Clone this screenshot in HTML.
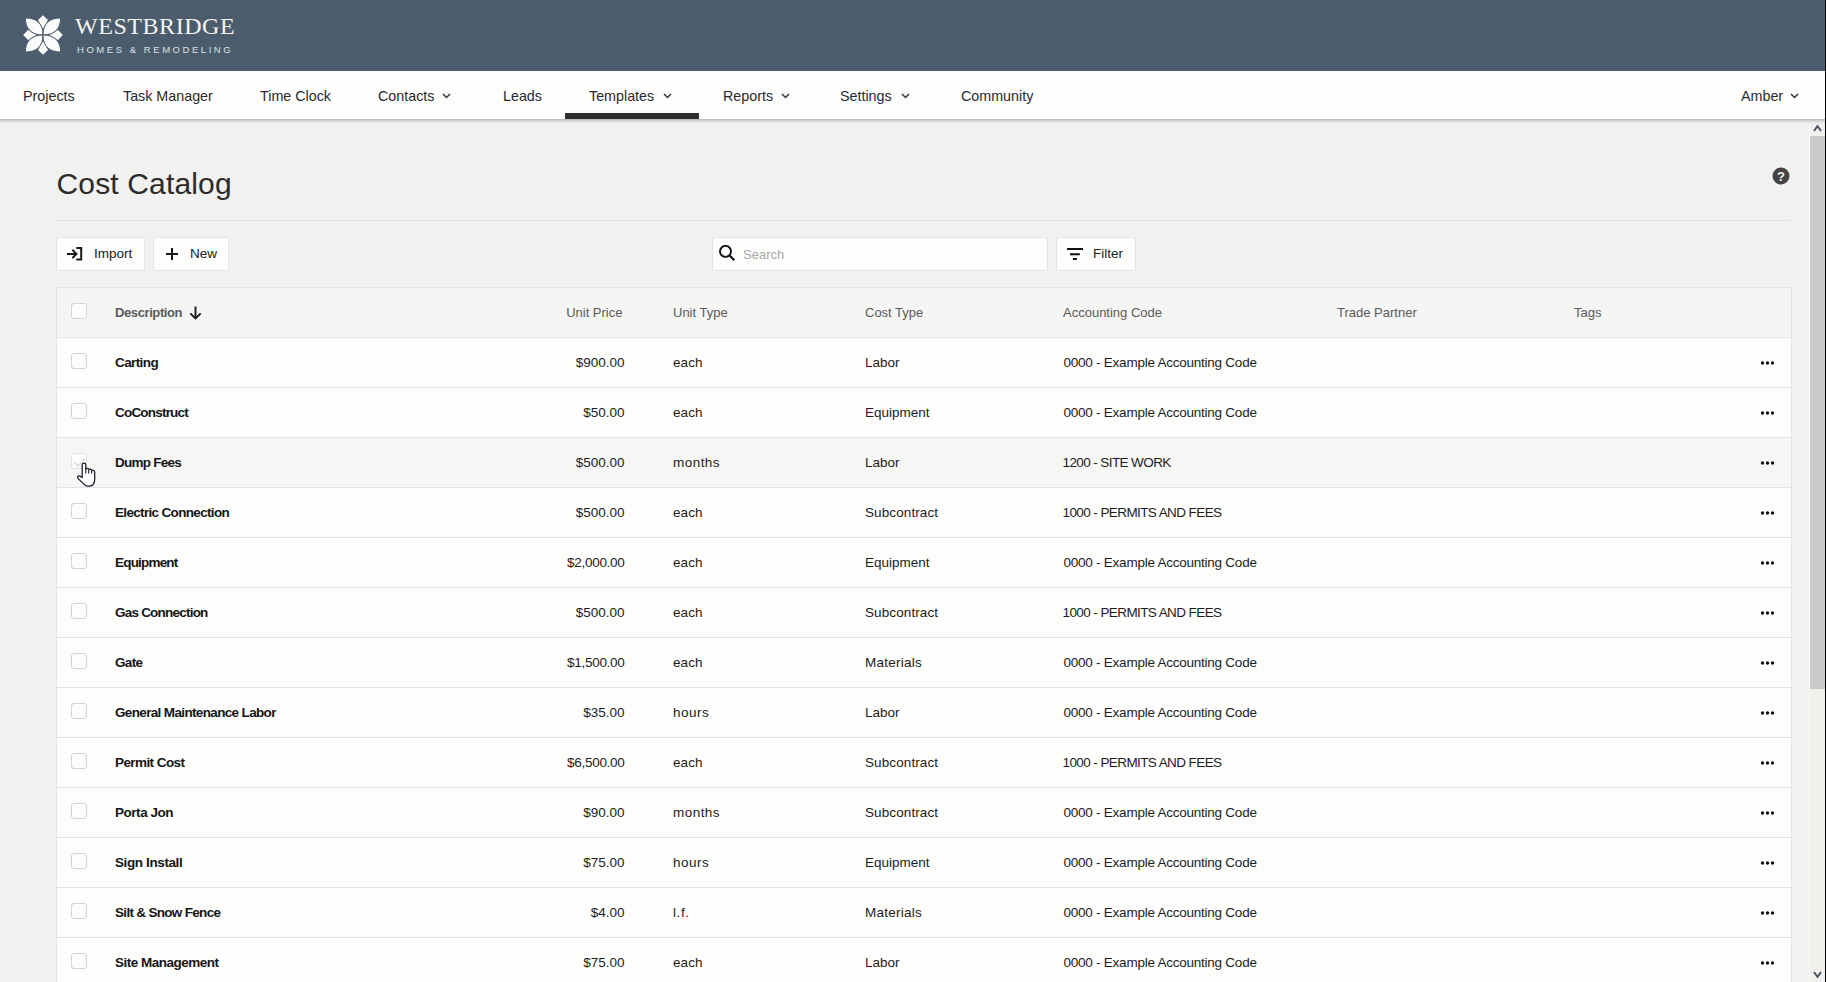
<!DOCTYPE html>
<html><head><meta charset="utf-8">
<style>
*{box-sizing:border-box;margin:0;padding:0}
html,body{width:1826px;height:982px;overflow:hidden;background:#f1f1ef;font-family:"Liberation Sans",sans-serif;color:#222}
.abs{position:absolute;white-space:nowrap}
#hdr{position:absolute;left:0;top:0;width:1826px;height:71px;background:#4b5d6c}
#nav{position:absolute;left:0;top:71px;width:1826px;height:48px;background:#fdfdfc}
#shd{position:absolute;left:0;top:119px;width:1825px;height:5px;background:linear-gradient(#bababa,#c8c8c9 20%,#d6d6d6 40%,#e2e2e2 60%,#ebebeb 80%,#f0f0ef)}
.nv{position:absolute;top:88px;font-size:14.3px;color:#262b31;line-height:16px}
.chev{position:absolute;top:93px;width:9px;height:6px}
#ul{position:absolute;left:565px;top:113px;width:134px;height:6px;background:#2d2d2d}
#title{position:absolute;left:56.5px;top:166.5px;font-size:30px;letter-spacing:0.15px;line-height:34px;color:#2b2b2b}
#hr{position:absolute;left:56px;top:220px;width:1735px;height:1px;background:#e3e3e3}
.btn{position:absolute;top:237px;height:34px;background:#fdfdfc;border:1px solid #e4e4e4;border-radius:1px}
.btxt{position:absolute;top:246px;font-size:13.5px;line-height:16px;color:#222}
#search{position:absolute;left:712px;top:237px;width:336px;height:34px;background:#fdfdfc;border:1px solid #e4e4e4;border-radius:1px}
#tbl{position:absolute;left:56px;top:287px;width:1736px;height:700px;border:1px solid #e3e3e3;background:#fdfdfc}
.th{position:absolute;top:0;left:0;width:1734px;height:50px;background:#f5f5f4;border-bottom:1px solid #e3e3e3}
.row{position:absolute;left:0;width:1734px;height:50px;border-bottom:1px solid #e3e3e3}
.cb{position:absolute;left:14px;top:15px;width:16px;height:16px;border:1px solid #d2d2d2;border-radius:3px;background:#fdfdfc}
.c{position:absolute;top:17px;font-size:13.5px;line-height:16px;color:#1c1c1c;white-space:nowrap}
.th .c{font-size:13px}
.hc{color:#5a5a5a}
.d{font-weight:bold;color:#161616;font-size:13.5px}
.pr{text-align:right;width:200px}
.dots{position:absolute;left:1703px;top:22.5px;width:16px;height:4px}
#sb{position:absolute;left:1809px;top:119px;width:16px;height:863px;background:#f2f0ec;border-left:1px solid #fafafa}
#thumb{position:absolute;left:1810px;top:136px;width:15px;height:553px;background:#cacaca}
#edge{position:absolute;left:1825px;top:0;width:1px;height:982px;background:#000}
</style></head><body>
<div id="hdr"></div>
<svg class="abs" style="left:22.5px;top:14.6px" width="40" height="40" viewBox="0 0 40 40">
<g fill="#fbfbfa">
<path d="M20 0.2 L25 5 L20 14 L15 5 Z"/>
<path d="M20 39.8 L25 35 L20 26 L15 35 Z"/>
<path d="M0.2 20 L5 25 L14 20 L5 15 Z"/>
<path d="M39.8 20 L35 25 L26 20 L35 15 Z"/>
</g>
<g fill="#fbfbfa" stroke="#4b5d6c" stroke-width="1">
<path d="M2.40 3.00 C12.96 3.00 20.00 8.10 20.00 20.00 C7.68 20.00 2.40 13.20 2.40 3.00 Z"/>
<path d="M2.40 37.00 C12.96 37.00 20.00 31.90 20.00 20.00 C7.68 20.00 2.40 26.80 2.40 37.00 Z"/>
<path d="M37.60 3.00 C27.04 3.00 20.00 8.10 20.00 20.00 C32.32 20.00 37.60 13.20 37.60 3.00 Z"/>
<path d="M37.60 37.00 C27.04 37.00 20.00 31.90 20.00 20.00 C32.32 20.00 37.60 26.80 37.60 37.00 Z"/>
</g></svg>
<div class="abs" style="left:75px;top:12px;font-family:'Liberation Serif',serif;font-size:24px;line-height:28px;color:#f3f3f2;letter-spacing:0.55px">WESTBRIDGE</div>
<div class="abs" style="left:77px;top:44px;font-size:9.5px;line-height:11px;color:#dde1e5;letter-spacing:2.55px">HOMES &amp; REMODELING</div>

<div id="nav"></div>
<div class="nv" style="left:23px">Projects</div>
<div class="nv" style="left:123px">Task Manager</div>
<div class="nv" style="left:260px">Time Clock</div>
<div class="nv" style="left:378px">Contacts</div>
<svg class="chev" style="left:442px" viewBox="0 0 9 6"><path d="M1 1 L4.5 4.5 L8 1" fill="none" stroke="#333" stroke-width="1.5"/></svg>
<div class="nv" style="left:503px">Leads</div>
<div class="nv" style="left:589px">Templates</div>
<svg class="chev" style="left:663px" viewBox="0 0 9 6"><path d="M1 1 L4.5 4.5 L8 1" fill="none" stroke="#333" stroke-width="1.5"/></svg>
<div id="ul"></div>
<div class="nv" style="left:723px">Reports</div>
<svg class="chev" style="left:781px" viewBox="0 0 9 6"><path d="M1 1 L4.5 4.5 L8 1" fill="none" stroke="#333" stroke-width="1.5"/></svg>
<div class="nv" style="left:840px">Settings</div>
<svg class="chev" style="left:901px" viewBox="0 0 9 6"><path d="M1 1 L4.5 4.5 L8 1" fill="none" stroke="#333" stroke-width="1.5"/></svg>
<div class="nv" style="left:961px">Community</div>
<div class="nv" style="left:1741px">Amber</div>
<svg class="chev" style="left:1789.5px" viewBox="0 0 9 6"><path d="M1 1 L4.5 4.5 L8 1" fill="none" stroke="#333" stroke-width="1.5"/></svg>

<div id="title">Cost Catalog</div>
<svg class="abs" style="left:1772px;top:167px" width="18" height="18" viewBox="0 0 18 18"><circle cx="9" cy="9" r="8.5" fill="#444"/><text x="9" y="13.5" text-anchor="middle" font-family="Liberation Sans" font-weight="bold" font-size="13" fill="#f1f1f0">?</text></svg>
<div id="hr"></div>

<div class="btn" style="left:56px;width:89px"></div>
<svg class="abs" style="left:66px;top:246px" width="17" height="15" viewBox="0 0 17 15"><path d="M1 7.9 H10.3 M6.3 3.7 L10.5 7.9 L6.3 12.1 M10.3 1.9 H15.2 V13.6 H10.3" fill="none" stroke="#1a1a1a" stroke-width="2"/></svg>
<div class="btxt" style="left:94px">Import</div>
<div class="btn" style="left:153px;width:76px"></div>
<svg class="abs" style="left:165px;top:247px" width="14" height="14" viewBox="0 0 14 14"><path d="M7 1 V13 M1 7 H13" fill="none" stroke="#1a1a1a" stroke-width="2"/></svg>
<div class="btxt" style="left:190px">New</div>

<div id="search"></div>
<svg class="abs" style="left:719px;top:245px" width="18" height="18" viewBox="0 0 18 18"><circle cx="6.5" cy="6.4" r="5.5" fill="none" stroke="#111" stroke-width="1.9"/><path d="M10.6 10.5 L15.3 15.2" stroke="#111" stroke-width="2.1"/></svg>
<div class="btxt" style="left:743px;top:247px;color:#a8a8a8;font-size:13px">Search</div>
<div class="btn" style="left:1056px;width:80px"></div>
<svg class="abs" style="left:1066px;top:247px" width="18" height="14" viewBox="0 0 18 14"><path d="M1 2 H17 M4 7.2 H13.8 M6.9 12.1 H10.9" fill="none" stroke="#111" stroke-width="2"/></svg>
<div class="btxt" style="left:1093px">Filter</div>

<div id="tbl">
 <div class="th">
  <div class="cb"></div>
  <div class="c hc" style="left:58px;font-weight:bold;letter-spacing:-0.4px">Description</div>
  <svg class="abs" style="left:131.5px;top:18px" width="13" height="14" viewBox="0 0 13 14"><path d="M6.5 0.5 V12.5 M1.3 7.3 L6.5 12.5 L11.7 7.3" fill="none" stroke="#1a1a1a" stroke-width="1.9"/></svg>
  <div class="c hc pr" style="left:365.5px">Unit Price</div>
  <div class="c hc" style="left:616px">Unit Type</div>
  <div class="c hc" style="left:808px">Cost Type</div>
  <div class="c hc" style="left:1006px">Accounting Code</div>
  <div class="c hc" style="left:1280px">Trade Partner</div>
  <div class="c hc" style="left:1517px">Tags</div>
 </div>
 <div class="row" style="top:50px"><div class="cb"></div><div class="c d" style="left:58px;letter-spacing:-0.6px">Carting</div><div class="c pr" style="left:367.5px;letter-spacing:0px">$900.00</div><div class="c" style="left:616px;letter-spacing:0.1px">each</div><div class="c" style="left:808px;letter-spacing:0px">Labor</div><div class="c" style="left:1006.5px;letter-spacing:-0.24px">0000 - Example Accounting Code</div><svg class="dots" viewBox="0 0 16 4"><circle cx="2.5" cy="2" r="1.7" fill="#111"/><circle cx="7.5" cy="2" r="1.7" fill="#111"/><circle cx="12.5" cy="2" r="1.7" fill="#111"/></svg></div>
<div class="row" style="top:100px"><div class="cb"></div><div class="c d" style="left:58px;letter-spacing:-0.8px">CoConstruct</div><div class="c pr" style="left:367.5px;letter-spacing:0px">$50.00</div><div class="c" style="left:616px;letter-spacing:0.1px">each</div><div class="c" style="left:808px;letter-spacing:0px">Equipment</div><div class="c" style="left:1006.5px;letter-spacing:-0.24px">0000 - Example Accounting Code</div><svg class="dots" viewBox="0 0 16 4"><circle cx="2.5" cy="2" r="1.7" fill="#111"/><circle cx="7.5" cy="2" r="1.7" fill="#111"/><circle cx="12.5" cy="2" r="1.7" fill="#111"/></svg></div>
<div class="row" style="top:150px;background:#f6f6f5"><div class="cb" style="border-color:#e0e0e0"><svg class="abs" style="left:1px;top:3px" width="14" height="11" viewBox="0 0 14 11"><path d="M1.5 5.3 L5.3 9.1 L12.2 1.2" fill="none" stroke="#d4d4d4" stroke-width="1.3"/></svg></div><div class="c d" style="left:58px;letter-spacing:-0.75px">Dump Fees</div><div class="c pr" style="left:367.5px;letter-spacing:0px">$500.00</div><div class="c" style="left:616px;letter-spacing:0.46px">months</div><div class="c" style="left:808px;letter-spacing:0px">Labor</div><div class="c" style="left:1005.5px;letter-spacing:-0.6px">1200 - SITE WORK</div><svg class="dots" viewBox="0 0 16 4"><circle cx="2.5" cy="2" r="1.7" fill="#111"/><circle cx="7.5" cy="2" r="1.7" fill="#111"/><circle cx="12.5" cy="2" r="1.7" fill="#111"/></svg></div>
<div class="row" style="top:200px"><div class="cb"></div><div class="c d" style="left:58px;letter-spacing:-0.67px">Electric Connection</div><div class="c pr" style="left:367.5px;letter-spacing:0px">$500.00</div><div class="c" style="left:616px;letter-spacing:0.1px">each</div><div class="c" style="left:808px;letter-spacing:0.1px">Subcontract</div><div class="c" style="left:1005.5px;letter-spacing:-0.59px">1000 - PERMITS AND FEES</div><svg class="dots" viewBox="0 0 16 4"><circle cx="2.5" cy="2" r="1.7" fill="#111"/><circle cx="7.5" cy="2" r="1.7" fill="#111"/><circle cx="12.5" cy="2" r="1.7" fill="#111"/></svg></div>
<div class="row" style="top:250px"><div class="cb"></div><div class="c d" style="left:58px;letter-spacing:-0.81px">Equipment</div><div class="c pr" style="left:367.5px;letter-spacing:-0.29px">$2,000.00</div><div class="c" style="left:616px;letter-spacing:0.1px">each</div><div class="c" style="left:808px;letter-spacing:0px">Equipment</div><div class="c" style="left:1006.5px;letter-spacing:-0.24px">0000 - Example Accounting Code</div><svg class="dots" viewBox="0 0 16 4"><circle cx="2.5" cy="2" r="1.7" fill="#111"/><circle cx="7.5" cy="2" r="1.7" fill="#111"/><circle cx="12.5" cy="2" r="1.7" fill="#111"/></svg></div>
<div class="row" style="top:300px"><div class="cb"></div><div class="c d" style="left:58px;letter-spacing:-0.78px">Gas Connection</div><div class="c pr" style="left:367.5px;letter-spacing:0px">$500.00</div><div class="c" style="left:616px;letter-spacing:0.1px">each</div><div class="c" style="left:808px;letter-spacing:0.1px">Subcontract</div><div class="c" style="left:1005.5px;letter-spacing:-0.59px">1000 - PERMITS AND FEES</div><svg class="dots" viewBox="0 0 16 4"><circle cx="2.5" cy="2" r="1.7" fill="#111"/><circle cx="7.5" cy="2" r="1.7" fill="#111"/><circle cx="12.5" cy="2" r="1.7" fill="#111"/></svg></div>
<div class="row" style="top:350px"><div class="cb"></div><div class="c d" style="left:58px;letter-spacing:-0.67px">Gate</div><div class="c pr" style="left:367.5px;letter-spacing:-0.29px">$1,500.00</div><div class="c" style="left:616px;letter-spacing:0.1px">each</div><div class="c" style="left:808px;letter-spacing:0.25px">Materials</div><div class="c" style="left:1006.5px;letter-spacing:-0.24px">0000 - Example Accounting Code</div><svg class="dots" viewBox="0 0 16 4"><circle cx="2.5" cy="2" r="1.7" fill="#111"/><circle cx="7.5" cy="2" r="1.7" fill="#111"/><circle cx="12.5" cy="2" r="1.7" fill="#111"/></svg></div>
<div class="row" style="top:400px"><div class="cb"></div><div class="c d" style="left:58px;letter-spacing:-0.65px">General Maintenance Labor</div><div class="c pr" style="left:367.5px;letter-spacing:0px">$35.00</div><div class="c" style="left:616px;letter-spacing:0.5px">hours</div><div class="c" style="left:808px;letter-spacing:0px">Labor</div><div class="c" style="left:1006.5px;letter-spacing:-0.24px">0000 - Example Accounting Code</div><svg class="dots" viewBox="0 0 16 4"><circle cx="2.5" cy="2" r="1.7" fill="#111"/><circle cx="7.5" cy="2" r="1.7" fill="#111"/><circle cx="12.5" cy="2" r="1.7" fill="#111"/></svg></div>
<div class="row" style="top:450px"><div class="cb"></div><div class="c d" style="left:58px;letter-spacing:-0.58px">Permit Cost</div><div class="c pr" style="left:367.5px;letter-spacing:-0.29px">$6,500.00</div><div class="c" style="left:616px;letter-spacing:0.1px">each</div><div class="c" style="left:808px;letter-spacing:0.1px">Subcontract</div><div class="c" style="left:1005.5px;letter-spacing:-0.59px">1000 - PERMITS AND FEES</div><svg class="dots" viewBox="0 0 16 4"><circle cx="2.5" cy="2" r="1.7" fill="#111"/><circle cx="7.5" cy="2" r="1.7" fill="#111"/><circle cx="12.5" cy="2" r="1.7" fill="#111"/></svg></div>
<div class="row" style="top:500px"><div class="cb"></div><div class="c d" style="left:58px;letter-spacing:-0.46px">Porta Jon</div><div class="c pr" style="left:367.5px;letter-spacing:0px">$90.00</div><div class="c" style="left:616px;letter-spacing:0.46px">months</div><div class="c" style="left:808px;letter-spacing:0.1px">Subcontract</div><div class="c" style="left:1006.5px;letter-spacing:-0.24px">0000 - Example Accounting Code</div><svg class="dots" viewBox="0 0 16 4"><circle cx="2.5" cy="2" r="1.7" fill="#111"/><circle cx="7.5" cy="2" r="1.7" fill="#111"/><circle cx="12.5" cy="2" r="1.7" fill="#111"/></svg></div>
<div class="row" style="top:550px"><div class="cb"></div><div class="c d" style="left:58px;letter-spacing:-0.39px">Sign Install</div><div class="c pr" style="left:367.5px;letter-spacing:0px">$75.00</div><div class="c" style="left:616px;letter-spacing:0.5px">hours</div><div class="c" style="left:808px;letter-spacing:0px">Equipment</div><div class="c" style="left:1006.5px;letter-spacing:-0.24px">0000 - Example Accounting Code</div><svg class="dots" viewBox="0 0 16 4"><circle cx="2.5" cy="2" r="1.7" fill="#111"/><circle cx="7.5" cy="2" r="1.7" fill="#111"/><circle cx="12.5" cy="2" r="1.7" fill="#111"/></svg></div>
<div class="row" style="top:600px"><div class="cb"></div><div class="c d" style="left:58px;letter-spacing:-0.69px">Silt &amp; Snow Fence</div><div class="c pr" style="left:367.5px;letter-spacing:0px">$4.00</div><div class="c" style="left:616px;letter-spacing:0.6px">l.f.</div><div class="c" style="left:808px;letter-spacing:0.25px">Materials</div><div class="c" style="left:1006.5px;letter-spacing:-0.24px">0000 - Example Accounting Code</div><svg class="dots" viewBox="0 0 16 4"><circle cx="2.5" cy="2" r="1.7" fill="#111"/><circle cx="7.5" cy="2" r="1.7" fill="#111"/><circle cx="12.5" cy="2" r="1.7" fill="#111"/></svg></div>
<div class="row" style="top:650px"><div class="cb"></div><div class="c d" style="left:58px;letter-spacing:-0.5px">Site Management</div><div class="c pr" style="left:367.5px;letter-spacing:0px">$75.00</div><div class="c" style="left:616px;letter-spacing:0.1px">each</div><div class="c" style="left:808px;letter-spacing:0px">Labor</div><div class="c" style="left:1006.5px;letter-spacing:-0.24px">0000 - Example Accounting Code</div><svg class="dots" viewBox="0 0 16 4"><circle cx="2.5" cy="2" r="1.7" fill="#111"/><circle cx="7.5" cy="2" r="1.7" fill="#111"/><circle cx="12.5" cy="2" r="1.7" fill="#111"/></svg></div>
</div>

<svg class="abs" style="left:76px;top:462px" width="21" height="26" viewBox="0 0 21 26"><path d="M6.2 15.6 L6.2 3 Q6.2 1.2 8 1.2 Q9.8 1.2 9.8 3 L9.8 6.9 Q11.9 5.7 12.7 7.3 Q14.7 6.7 15.6 8.3 Q18.7 7.9 18.7 10.6 L18.7 17.8 Q18.7 21.2 16.6 23 Q15.4 24.1 13 24.1 L11.6 24.1 Q9.4 24 7.9 22.1 L2.4 16.9 Q0.8 15.1 2.3 14.1 Q3.8 13.2 6.2 15.6 Z" fill="#fff" stroke="#141828" stroke-width="1.25" stroke-linejoin="round"/><path d="M9.8 6.9 V11.6 M12.7 7.3 V11.6 M15.6 8.3 V11.6" stroke="#141828" stroke-width="1.1"/></svg>
<div id="sb"></div>
<div id="thumb"></div>
<svg class="abs" style="left:1813px;top:124px" width="9" height="8" viewBox="0 0 9 8"><path d="M1 6.8 L4.5 2.2 L8 6.8" fill="none" stroke="#4a5764" stroke-width="2"/></svg>
<svg class="abs" style="left:1813px;top:971px" width="9" height="8" viewBox="0 0 9 8"><path d="M1 1.2 L4.5 5.8 L8 1.2" fill="none" stroke="#4a5764" stroke-width="2"/></svg>
<div id="shd"></div>
<div id="edge"></div>
</body></html>
